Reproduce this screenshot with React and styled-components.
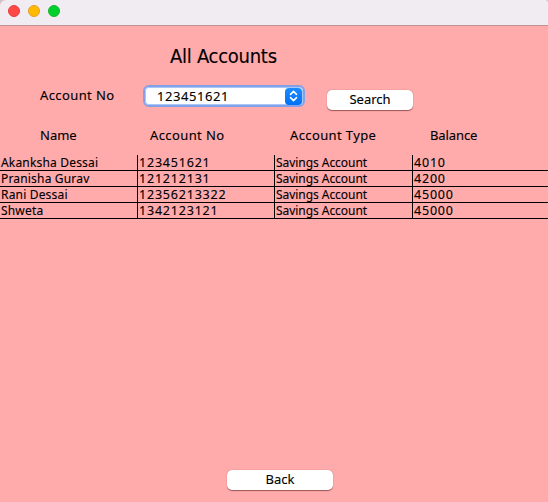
import React from "react";
import styled, { createGlobalStyle } from "styled-components";

const GlobalStyle = createGlobalStyle`
  *, *::before, *::after { box-sizing: border-box; }
  html, body { margin: 0; background: #c9c4c7; overflow: hidden; }
`;

const Window = styled.div`
  width: 548px;
  height: 502px;
  display: flex;
  flex-direction: column;
  overflow: hidden;
  border-radius: 6px 3px 0 0;
  background: #ffaaab;
  color: #000;
  font: 13px/16px "Noto Sans", "Open Sans", sans-serif;
  -webkit-text-stroke: 0.12px #000;
  white-space: nowrap;
`;

const TitleBar = styled.header`
  flex: none;
  height: 26px;
  display: flex;
  align-items: flex-start;
  gap: 8px;
  padding: 5px 8px 0;
  background: #f1ecf2;
  border-bottom: 1px solid #c09399;
`;

const TrafficLight = styled.span`
  width: 12px;
  height: 12px;
  border-radius: 50%;
  background: ${(p) => p.$fill};
  border: 1px solid ${(p) => p.$ring};
`;

const Text = styled.span`
  letter-spacing: ${(p) => p.$track || 0}px;
`;

const Title = styled.h1`
  margin: 17px 0 0 170px;
  height: 26px;
  font: 400 20px/26px "DejaVu Sans Condensed", "DejaVu Sans", sans-serif;
  font-stretch: condensed;
  letter-spacing: -0.27px;
`;

const SearchRow = styled.form`
  margin: 16px 0 0;
  height: 26px;
  padding-left: 40px;
  display: flex;
  align-items: flex-start;
`;

const FieldLabel = styled.label`
  width: 103px;
  padding-top: 2px;
`;

const ComboBox = styled.div`
  width: 162px;
  height: 22px;
  padding: 0 1px 0 12px;
  display: flex;
  align-items: center;
  justify-content: space-between;
  background: #fff;
  border: 2px solid #83a1e8;
  border-radius: 6px;
  box-shadow: inset 0 0 0 1px #a9c6f8;
`;

const ComboValue = styled.span`
  padding-bottom: 1px;
  letter-spacing: 0.55px;
`;

const Stepper = styled.span`
  width: 17px;
  height: 17px;
  display: flex;
  align-items: center;
  justify-content: center;
  border-radius: 4px;
  background: linear-gradient(#1c8bff, #0070f5);
`;

const PushButton = styled.button`
  width: ${(p) => p.$width}px;
  height: 20px;
  padding: 0 0 2px;
  border: 0;
  border-radius: 5px;
  background: #fff;
  color: #000;
  font: inherit;
  line-height: 18px;
  text-align: center;
  box-shadow: 0 0.5px 1px rgba(90, 30, 30, 0.6);
`;

const SearchSlot = styled.div`
  margin: 5px 0 0 22px;
  display: flex;
`;

const ColumnHeads = styled.div`
  margin-top: 16px;
  height: 16px;
  padding-left: 40px;
  display: grid;
  grid-template-columns: 110px 140px 140px 1fr;
`;

const Table = styled.div`
  margin-top: 12px;
  display: grid;
  grid-template-columns: 138px 137px 138px 135px;
  grid-auto-rows: 16px;
`;

const Cell = styled.div`
  display: flex;
  padding-left: 1px;
  font-size: ${(p) => p.$size}px;
  line-height: 15px;
  letter-spacing: ${(p) => p.$track}px;
  border-bottom: 1px solid #000;
  border-right: ${(p) => (p.$last ? 0 : 1)}px solid #000;
`;

const CellText = styled.span`
  display: block;
  height: 15px;
`;

const Footer = styled.footer`
  margin: auto 0 12px 227px;
  display: flex;
`;

const accounts = [
  ["Akanksha Dessai", "123451621", "Savings Account", "4010"],
  ["Pranisha Gurav", "121212131", "Savings Account", "4200"],
  ["Rani Dessai", "12356213322", "Savings Account", "45000"],
  ["Shweta", "1342123121", "Savings Account", "45000"],
];

const columns = [
  { size: 12, track: 0.18 },
  { size: 12.5, track: 0.8 },
  { size: 12, track: -0.05 },
  { size: 12.5, track: 0.8 },
];

export default function App() {
  return (
    <>
      <GlobalStyle />
      <Window>
        <TitleBar>
          <TrafficLight $fill="#ff4746" $ring="#e0413f" />
          <TrafficLight $fill="#ffba00" $ring="#dfa023" />
          <TrafficLight $fill="#00d02b" $ring="#1bb32f" />
        </TitleBar>
        <Title>All Accounts</Title>
        <SearchRow>
          <FieldLabel>
            <Text $track={0.4}>Account No</Text>
          </FieldLabel>
          <ComboBox>
            <ComboValue>123451621</ComboValue>
            <Stepper>
              <svg width="9" height="12" viewBox="0 0 9 12" fill="none" stroke="#fff" strokeWidth="1.6" strokeLinecap="round" strokeLinejoin="round">
                <path d="M1.5 4.3 4.5 1.4 7.5 4.3M1.5 7.7 4.5 10.6 7.5 7.7" />
              </svg>
            </Stepper>
          </ComboBox>
          <SearchSlot>
            <PushButton type="button" $width={86}>
              Search
            </PushButton>
          </SearchSlot>
        </SearchRow>
        <ColumnHeads>
          <Text>Name</Text>
          <Text $track={0.4}>Account No</Text>
          <Text $track={0.38}>Account Type</Text>
          <Text $track={-0.1}>Balance</Text>
        </ColumnHeads>
        <Table>
          {accounts.map((row, r) =>
            row.map((value, c) => (
              <Cell
                key={`${r}-${c}`}
                $last={c === 3}
                $size={columns[c].size}
                $track={columns[c].track}
              >
                <CellText>{value}</CellText>
              </Cell>
            ))
          )}
        </Table>
        <Footer>
          <PushButton type="button" $width={106}>
            Back
          </PushButton>
        </Footer>
      </Window>
    </>
  );
}
